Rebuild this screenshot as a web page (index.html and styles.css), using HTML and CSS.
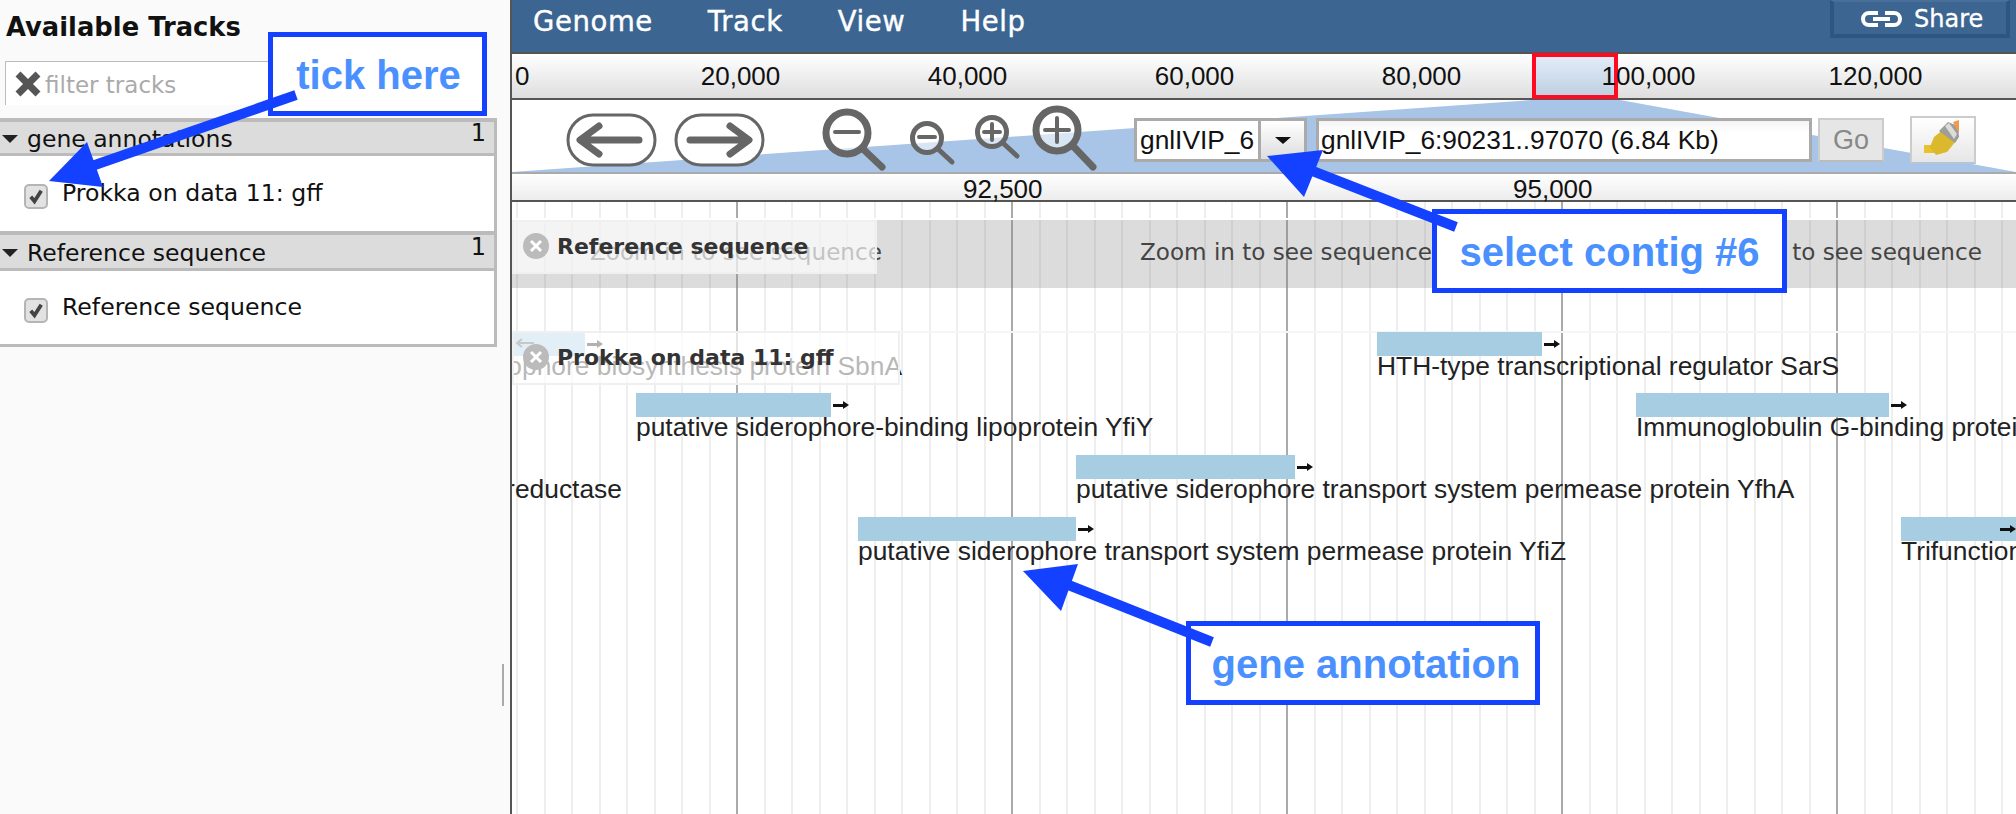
FILE: index.html
```html
<!DOCTYPE html>
<html lang="en">
<head>
<meta charset="utf-8">
<title>JBrowse</title>
<link rel="stylesheet" href="styles.css">
</head>
<body>
<div class="app">
  <aside class="sidebar">
    <h1 class="sidebar-title">Available Tracks</h1>
    <div class="filter">
      <svg class="filter-x" viewBox="0 0 28 28"><path d="M4 4L24 24M24 4L4 24"/></svg>
      <span>filter tracks</span>
    </div>
    <section class="category">
      <header class="category-head"><i class="caret"></i><span class="category-name">gene annotations</span><span class="count">1</span></header>
      <label class="track-item"><span class="check"><svg viewBox="0 0 24 24"><path d="M5 13l5 6L19 5"/></svg></span>Prokka on data 11: gff</label>
    </section>
    <section class="category">
      <header class="category-head"><i class="caret"></i><span class="category-name">Reference sequence</span><span class="count">1</span></header>
      <label class="track-item"><span class="check"><svg viewBox="0 0 24 24"><path d="M5 13l5 6L19 5"/></svg></span>Reference sequence</label>
    </section>
    <i class="resizer"></i>
  </aside>

  <main class="browser">
    <nav class="menubar">
      <a class="menu-item">Genome</a>
      <a class="menu-item">Track</a>
      <a class="menu-item">View</a>
      <a class="menu-item">Help</a>
      <a class="share">
        <svg viewBox="0 0 41 16"><path d="M17 2H8a6 6 0 0 0 0 12h9M24 2h9a6 6 0 0 1 0 12h-9M12 8h17"/></svg>
        Share
      </a>
    </nav>

    <div class="overview">
      <span class="ov-first">0</span>
      <span class="ov-label">20,000</span>
      <span class="ov-label">40,000</span>
      <span class="ov-label">60,000</span>
      <span class="ov-label">80,000</span>
      <i class="ov-highlight"></i>
      <span class="ov-label">100,000</span>
      <span class="ov-label">120,000</span>
    </div>

    <div class="controls">
      <svg class="zoom-wedge" viewBox="0 0 1504 72" preserveAspectRatio="none"><path d="M0 72L1020 0H1108L1504 72Z"/></svg>
      <svg class="nav-icons" viewBox="0 0 534 72">
        <rect class="pill" x="2" y="15" width="87" height="50" rx="25"/>
        <path class="arrow" d="M73 40H15M33 26L14 40L33 54"/>
        <rect class="pill" x="110" y="15" width="87" height="50" rx="25"/>
        <path class="arrow" d="M124 40H182M164 26L183 40L164 54"/>
        <g class="lens-big">
          <circle cx="281" cy="33" r="21"/><path d="M297 49L316 67"/><path class="sign" d="M269 32H293"/>
        </g>
        <g class="lens-small">
          <circle cx="361" cy="38" r="14.500"/><path d="M372 49L386 62"/><path class="sign" d="M353 37H369"/>
        </g>
        <g class="lens-small">
          <circle cx="426" cy="32" r="14.500"/><path d="M437 43L451 56"/><path class="sign" d="M418 32H434M426 24V40"/>
        </g>
        <g class="lens-big">
          <circle cx="491" cy="30" r="21"/><path d="M507 46L527 67"/><path class="sign" d="M479 30H503M491 18V42"/>
        </g>
      </svg>
      <div class="ref-select">
        <span class="ref-value">gnlIVIP_6</span>
        <span class="ref-drop"><i class="caret"></i></span>
      </div>
      <div class="location">gnlIVIP_6:90231..97070 (6.84 Kb)</div>
      <button class="go">Go</button>
      <button class="highlight-btn">
        <svg viewBox="0 0 62 44">
          <path fill="#e6c22c" d="M12 27h19v8H12z"/>
          <path fill="#dcb82c" d="M18 29l4-10 10-8 12 12-9 11-11 3z"/>
          <path fill="#9d9d99" d="M27 13l9-9 10 4 1 11-4 6z"/>
          <path fill="#dcdcd8" d="M33 8l4-3 8 11-3 5z"/>
          <path fill="#f09a4a" d="M41 4l6-2v13z"/>
        </svg>
      </button>
    </div>

    <div class="scale">
      <span class="scale-label">92,500</span>
      <span class="scale-label">95,000</span>
    </div>

    <div class="tracks">
      <div class="track-ref">
        <div class="seq-band">
          <span class="seq-note">Zoom in to see sequence</span>
          <span class="seq-note">Zoom in to see sequence</span>
          <span class="seq-note">Zoom in to see sequence</span>
        </div>
        <div class="track-label label-ref">
          <svg class="close" viewBox="0 0 26 26"><circle cx="13" cy="13" r="13"/><path d="M8 8l10 10M18 8L8 18"/></svg>
          Reference sequence
        </div>
      </div>
      <div class="track-gff">
        <div class="feature end" style="left:-400px;top:-1px;width:790px">
          <div class="bar" style="width:473px"></div>
          <div class="feature-name">Siderophore biosynthesis protein SbnA</div>
        </div>
        <svg class="back-arrow" viewBox="0 0 18 10"><path d="M18 5H3M6 1L1 5l5 4"/></svg>
        <div class="feature" style="left:865px;top:-1px"><div class="bar" style="width:165px"></div><div class="feature-name">HTH-type transcriptional regulator SarS</div></div>
        <div class="feature" style="left:124px;top:60px"><div class="bar" style="width:195px"></div><div class="feature-name">putative siderophore-binding lipoprotein YfiY</div></div>
        <div class="feature" style="left:1124px;top:60px"><div class="bar" style="width:253px"></div><div class="feature-name">Immunoglobulin G-binding protein A</div></div>
        <div class="feature end" style="left:-300px;top:122px;width:410px"><div class="bar" style="width:100px"></div><div class="feature-name">Oxidoreductase</div></div>
        <div class="feature" style="left:564px;top:122px"><div class="bar" style="width:219px"></div><div class="feature-name">putative siderophore transport system permease protein YfhA</div></div>
        <div class="feature" style="left:346px;top:184px"><div class="bar" style="width:218px"></div><div class="feature-name">putative siderophore transport system permease protein YfiZ</div></div>
        <div class="feature" style="left:1389px;top:184px"><div class="bar bar-clipped" style="width:115px"></div><div class="feature-name">Trifunctional protein</div></div>
        <div class="track-label label-gff">
          <svg class="close" viewBox="0 0 26 26"><circle cx="13" cy="13" r="13"/><path d="M8 8l10 10M18 8L8 18"/></svg>
          Prokka on data 11: gff
        </div>
      </div>
    </div>
  </main>
</div>

<svg class="callout-arrows" viewBox="0 0 2016 814">
  <path d="M49 181L87 142L103 187Z"/><path class="shaft" d="M296 95L92 166"/>
  <path d="M1267 156L1323 150L1304 197Z"/><path class="shaft" d="M1456 227L1310 170"/>
  <path d="M1023 571L1078 564L1061 611Z"/><path class="shaft" d="M1212 642L1066 584"/>
</svg>
<div class="callout callout-tick">tick here</div>
<div class="callout callout-contig">select contig #6</div>
<div class="callout callout-gene">gene annotation</div>
</body>
</html>
```
FILE: styles.css
```css
* { box-sizing: border-box; }
html, body { margin: 0; height: 100%; overflow: hidden; background: #fff; }
body { position: relative; font-family: "Liberation Sans", Arial, sans-serif; color: #111; }
.app { display: flex; height: 814px; }

/* sidebar */
.sidebar { position: relative; flex: 0 0 510px; background: #fafafa; font-family: "DejaVu Sans", sans-serif; padding-top: 13px; }
.sidebar-title { margin: 0 0 0 6px; height: 48px; font-size: 25.800px; line-height: 28px; font-weight: bold; color: #111; }
.filter { display: flex; align-items: center; gap: 3px; width: 470px; height: 44px; margin: 0 0 13px 5px; padding: 2px 0 0 8px; background: #fff; border: solid #bbb; border-width: 1px 0 0 1px; color: #aaa; font-size: 23px; }
.filter-x { width: 28px; height: 28px; flex: none; margin-top: -2px; }
.filter-x path { stroke: #555; stroke-width: 7; fill: none; }
.category { width: 497px; background: #fff; border-right: 3px solid #bbb; }
.category-head { display: flex; align-items: center; height: 38px; padding: 2px 8px 0 2px; background: #dcdcdc; border: solid #bbb; border-width: 4px 0 3px; font-size: 23.500px; color: #111; }
.caret { display: block; width: 0; height: 0; border: solid transparent; border-width: 8px 8px 0; border-top-color: #222; }
.category-name { margin-left: 9px; flex: 1; }
.count { font-size: 24px; margin-top: -12px; }
.track-item { display: flex; align-items: center; height: 75px; padding: 0 0 2px 24px; font-size: 23.600px; color: #111; border-bottom: 0 solid #bbb; }
.category + .category .track-item { border-bottom-width: 3px; height: 76px; }
.category + .category .category-head { height: 40px; }
.check { display: flex; align-items: center; justify-content: center; width: 24px; height: 25px; margin: 7px 14px 0 0; background: #e2e2e2; border: 2px solid #b5b5b5; border-radius: 5px; }
.check svg { width: 18px; height: 18px; }
.check path { stroke: #444; stroke-width: 5; fill: none; }
.resizer { position: absolute; left: 502px; top: 664px; width: 2px; height: 42px; background: #aaa; }

/* browser */
.browser { flex: 1; min-width: 0; display: flex; flex-direction: column; border-left: 2px solid #555; }
.menubar { display: flex; align-items: flex-start; gap: 55px; height: 52px; padding: 4px 6px 0 21px; background: #3c6591; font-family: "DejaVu Sans", sans-serif; font-size: 27.500px; line-height: 34px; letter-spacing: .6px; color: #fff; flex: none; }
.menu-item { -webkit-text-stroke: .4px #fff; }
.share { display: flex; align-items: center; gap: 12px; width: 180px; height: 38px; margin: -4px 0 0 auto; padding: 2px 0 0 27px; background: #3c6591; border: solid; border-width: 2px 4px 4px 4px; border-color: #48709b #2f5682 #2f5682 #2f5682; font-size: 24px; letter-spacing: 0; -webkit-text-stroke: .3px #fff; }
.share svg { width: 41px; height: 16px; flex: none; }
.share path { stroke: #fff; stroke-width: 4; fill: none; }

.overview { position: relative; display: flex; flex: none; height: 48px; background: linear-gradient(#fff, #dedede); border: solid #555; border-width: 2px 0; font-size: 26px; line-height: 44px; color: #111; }
.ov-first { width: 115px; padding-left: 3px; }
.ov-label { position: relative; width: 227px; text-align: center; }
.ov-highlight { position: absolute; left: 1020px; top: -1px; width: 86px; height: 46px; border: 4px solid #ff0a20; background: linear-gradient(#e2ecf8, #bfd0e2); }

.controls { position: relative; flex: none; display: flex; align-items: flex-start; height: 74px; padding-top: 18px; border-bottom: 2px solid #aaa; }
.zoom-wedge { position: absolute; left: 0; top: 0; width: 1504px; height: 72px; }
.zoom-wedge path { fill: #a8c5e8; }
.nav-icons { position: relative; flex: none; width: 534px; height: 72px; margin: -18px 34px 0 54px; }
.pill { fill: #fff; stroke: #666; stroke-width: 3; }
.arrow { fill: none; stroke: #666; stroke-width: 7; stroke-linecap: round; stroke-linejoin: round; }
.nav-icons g { fill: #fff; fill-opacity: .55; stroke: #666; stroke-linecap: round; }
.lens-big { stroke-width: 7; }
.lens-small { stroke-width: 5; }
.sign { stroke-width: 4; fill: none; }
.ref-select { position: relative; flex: none; display: flex; width: 173px; height: 44px; background: #fff; border: 3px solid #aaa; font-size: 26.300px; line-height: 38px; }
.ref-value { width: 124px; padding-left: 3px; border-right: 3px solid #aaa; white-space: nowrap; }
.ref-drop { flex: 1; display: flex; align-items: center; justify-content: center; background: linear-gradient(#fff, #ddd); }
.ref-drop .caret { border-width: 7px 8px 0; border-top-color: #111; }
.location { position: relative; flex: none; width: 496px; height: 44px; margin-left: 9px; padding-left: 2px; background: linear-gradient(#f4f4f4, #fff 30%); border: 3px solid #aaa; font-size: 26.300px; line-height: 38px; white-space: nowrap; }
.go { position: relative; flex: none; width: 66px; height: 44px; margin-left: 6px; padding: 0; background: #e6e6e6; border: 2px solid #ccc; border-bottom-color: #bbb; font: 27px "Liberation Sans", sans-serif; color: #888; }
.highlight-btn { position: relative; flex: none; width: 66px; height: 48px; margin: -2px 0 0 26px; padding: 0; background: linear-gradient(#fff, #e6e6e6); border: 2px solid #ccc; border-bottom-color: #b5c5d8; display: block; }
.highlight-btn svg { display: block; width: 62px; height: 44px; }

.scale { flex: none; display: flex; height: 28px; padding-left: 451px; background: linear-gradient(#fff, #ececec); border-bottom: 2px solid #555; font-size: 26px; line-height: 31px; color: #111; }
.scale-label { width: 550px; flex: none; }

.tracks {
  position: relative; flex: 1; overflow: hidden; padding-top: 16px;
  background:
    repeating-linear-gradient(90deg, transparent 0 224px, #aaa 224px 226px, transparent 226px 275px),
    repeating-linear-gradient(90deg, transparent 0 4px, #eee 4px 6px, transparent 6px 27.5px),
    #fff;
}
.track-ref { position: relative; height: 113px; border-top: 2px solid #fff; }
.seq-band { display: flex; height: 68px; padding-left: 78px; background: rgba(128,128,128,.275); font-family: "DejaVu Sans", sans-serif; font-size: 23.100px; line-height: 64px; color: #444; white-space: nowrap; }
.seq-note { flex: none; width: 550px; }
.track-gff { position: relative; height: 483px; border-top: 2px solid #f5f5f5; }
.feature { position: absolute; white-space: nowrap; font-size: 26.400px; line-height: 24px; color: #222; }
.feature .bar { position: relative; height: 24px; background: #a7cde2; }
.feature .bar::after { content: ""; position: absolute; right: -14px; top: 11px; width: 12px; height: 2.500px; background: #111; }
.feature .bar::before { content: ""; position: absolute; right: -18px; top: 8px; border: solid transparent; border-width: 4px 0 4px 6px; border-left-color: #111; }
.feature .bar-clipped::after { right: 4px; }
.feature .bar-clipped::before { right: 0; }
.feature.end .feature-name { text-align: right; }
.feature-name { height: 24px; margin-top: -2px; }
.back-arrow { position: absolute; left: 4px; top: 5px; width: 18px; height: 10px; }
.back-arrow path { stroke: #555; stroke-width: 2; fill: none; }
.track-label { position: absolute; display: flex; align-items: center; gap: 8px; left: 0; height: 54px; padding: 0 0 2px 9px; background: rgba(255,255,255,.68); border: 2px solid #f0f0f0; font-family: "DejaVu Sans", sans-serif; font-size: 22px; font-weight: bold; color: #333; white-space: nowrap; }
.label-ref { top: 0; width: 365px; border-color: #f0f0f0; }
.label-gff { top: -2px; width: 388px; }
.close { width: 26px; height: 26px; flex: none; }
.close circle { fill: #bbb; }
.close path { stroke: #fff; stroke-width: 3; fill: none; }

/* callouts */
.callout-arrows { position: absolute; left: 0; top: 0; width: 2016px; height: 814px; pointer-events: none; z-index: 2; }
.callout-arrows path { fill: #1440ff; }
.callout-arrows .shaft { fill: none; stroke: #1440ff; stroke-width: 10; }
.callout { position: absolute; display: flex; align-items: center; justify-content: center; background: #fff; border: 5px solid #1440ff; padding-top: 2px; font-size: 40px; font-weight: bold; color: #4a90ff; z-index: 1; }
.callout-tick { left: 268px; top: 32px; width: 219px; height: 84px; padding-left: 2px; }
.callout-contig { left: 1432px; top: 209px; width: 355px; height: 84px; }
.callout-gene { left: 1186px; top: 621px; width: 354px; height: 84px; padding-left: 6px; }
```
